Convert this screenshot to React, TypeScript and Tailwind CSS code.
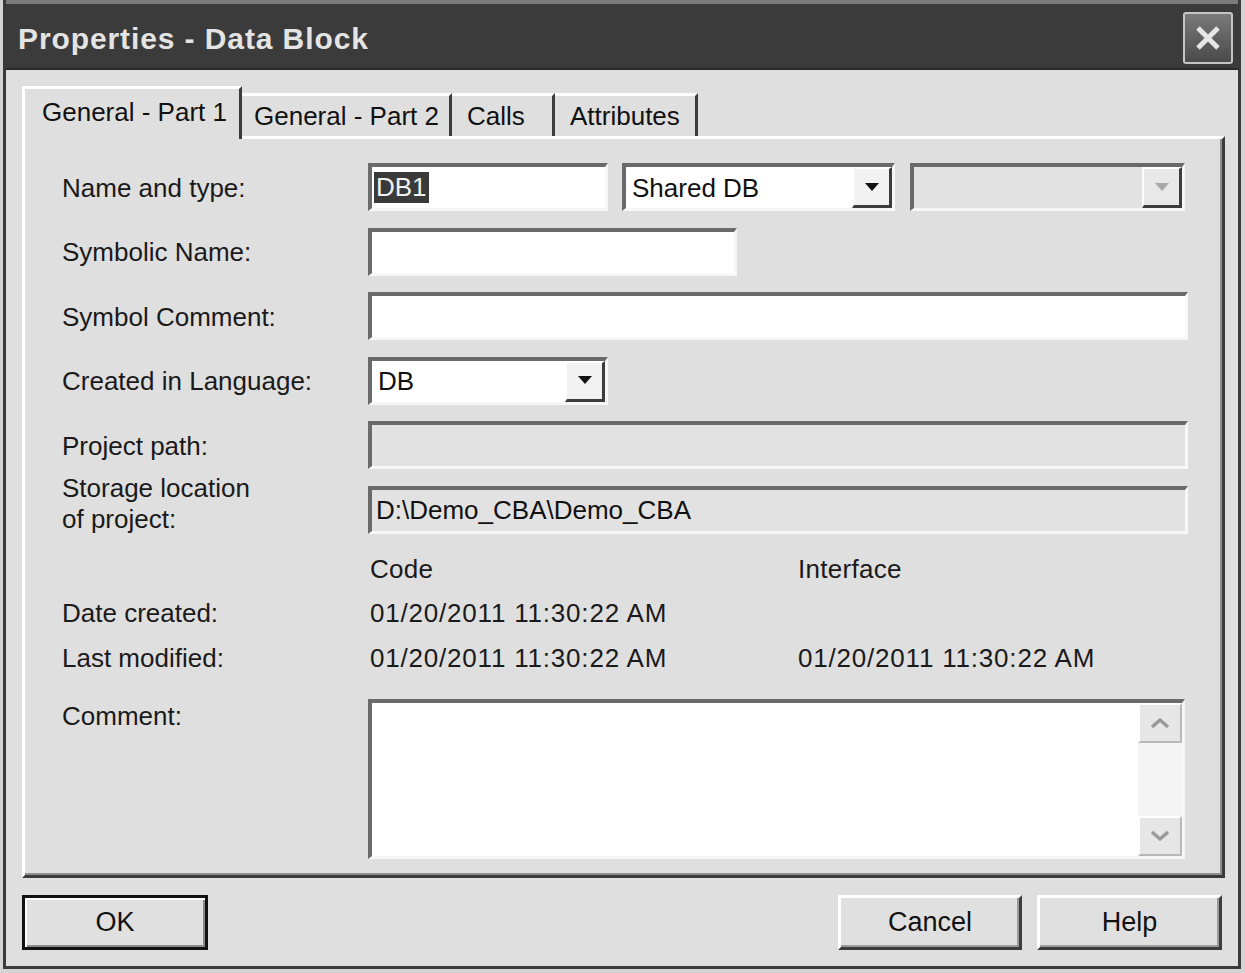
import React from 'react';

const sunken =
  'border-t-[4px] border-l-[4px] border-b-[3px] border-r-[3px] border-t-[#6a6a6a] border-l-[#6a6a6a] border-b-[#f7f7f7] border-r-[#f7f7f7]';

const raised =
  'border-t-[3px] border-l-[3px] border-b-[3px] border-r-[3px] border-t-white border-l-white border-b-[#3c3c3c] border-r-[#3c3c3c] shadow-[inset_-2px_-2px_0_#9a9a9a]';

function Arrow({ disabled }: { disabled?: boolean }) {
  return (
    <svg width="14" height="9" viewBox="0 0 14 9">
      <path d="M0 0 H14 L7 8 Z" fill={disabled ? '#a8a8a8' : '#111'} />
    </svg>
  );
}

function Combo({ width, value, disabled }: { width: string; value?: string; disabled?: boolean }) {
  return (
    <div className={`${width} h-[48px] ${sunken} flex ${disabled ? 'bg-[#e2e2e2]' : 'bg-white'}`}>
      <div className="flex-1 flex items-center pl-[6px] text-[26px] leading-none text-[#111]">
        {value}
      </div>
      <div
        className={`w-[40px] flex items-center justify-center ${
          disabled ? 'bg-[#e8e8e8]' : 'bg-[#f2f2f2]'
        } border-b-[3px] border-r-[3px] border-b-[#3c3c3c] border-r-[#3c3c3c] border-t-[2px] border-l-[2px] border-t-white border-l-white`}
      >
        <Arrow disabled={disabled} />
      </div>
    </div>
  );
}

function Field({ width, value, disabled }: { width: string; value?: string; disabled?: boolean }) {
  return (
    <div
      className={`${width} h-[48px] ${sunken} flex items-center pl-[4px] text-[26px] leading-none text-[#111] ${
        disabled ? 'bg-[#e2e2e2]' : 'bg-white'
      }`}
    >
      {value}
    </div>
  );
}

function Row({
  label,
  children,
  labelClass = 'pt-[2px]',
}: {
  label: React.ReactNode;
  children: React.ReactNode;
  labelClass?: string;
}) {
  return (
    <div className="flex items-center h-[48px]">
      <div className={`w-[306px] text-[26px] leading-[31px] text-[#1a1a1a] ${labelClass}`}>{label}</div>
      {children}
    </div>
  );
}

function Tab({ label, width, pad, active }: { label: string; width: string; pad: string; active?: boolean }) {
  if (active) {
    return (
      <div
        className={`${width} ${pad} h-[53px] relative z-10 -mb-[3px] bg-[#dfdfdf] border-t-[3px] border-l-[3px] border-r-[3px] border-t-white border-l-white border-r-[#3c3c3c] flex items-center text-[26px] leading-none text-[#111]`}
      >
        <span className="-mt-[4px]">{label}</span>
      </div>
    );
  }
  return (
    <div
      className={`${width} ${pad} h-[43px] bg-[#dfdfdf] border-t-[3px] border-r-[3px] border-t-white border-r-[#3c3c3c] flex items-center text-[26px] leading-none text-[#111]`}
    >
      {label}
    </div>
  );
}

function Chevron({ up }: { up?: boolean }) {
  return (
    <svg width="20" height="12" viewBox="0 0 20 12">
      <path
        d={up ? 'M2 10 L10 3 L18 10' : 'M2 2 L10 9 L18 2'}
        fill="none"
        stroke="#9a9a9a"
        strokeWidth="3.5"
      />
    </svg>
  );
}

function Button({ label, width, isDefault }: { label: string; width: string; isDefault?: boolean }) {
  return (
    <div
      className={`${width} h-[55px] flex items-center justify-center text-[27px] leading-none text-[#111] bg-[#e0e0e0] ${
        isDefault ? 'border-[3px] border-[#111] shadow-[inset_2px_2px_0_#fff,inset_-2px_-2px_0_#8a8a8a]' : raised
      }`}
    >
      {label}
    </div>
  );
}

export default function App() {
  return (
    <div className="w-[1245px] h-[973px] bg-[#d4d4d4] overflow-hidden font-['Liberation_Sans',Arial,sans-serif]">
      <div className="ml-[3px] w-[1238px] h-[969px] bg-[#dfdfdf] border-l-[3px] border-r-[3px] border-b-[3px] border-[#3a3a3a] flex flex-col">
        {/* title bar */}
        <div className="h-[70px] shrink-0 bg-[#3b3b3b] border-t-[4px] border-t-[#7a7a7a] border-b-[2px] border-b-[#2a2a2a] flex items-center pl-[12px] pr-[5px]">
          <div className="flex-1 text-[30px] font-bold tracking-[0.9px] text-[#e4e4e4] leading-none mt-[6px]">
            Properties - Data Block
          </div>
          <div className="w-[50px] h-[52px] mt-[4px] border-[2px] border-[#c4c4c4] rounded-[3px] bg-gradient-to-b from-[#7a7a7a] to-[#4a4a4a] flex items-center justify-center">
            <svg width="30" height="30" viewBox="0 0 30 30">
              <path d="M5 5 L25 25 M25 5 L5 25" stroke="#e6e6e6" strokeWidth="5" />
            </svg>
          </div>
        </div>

        {/* tabs */}
        <div className="flex items-end pl-[16px] h-[66px] shrink-0">
          <Tab label="General - Part 1" width="w-[220px]" pad="pl-[17px]" active />
          <Tab label="General - Part 2" width="w-[210px]" pad="pl-[12px]" />
          <Tab label="Calls" width="w-[103px]" pad="pl-[15px]" />
          <Tab label="Attributes" width="w-[143px]" pad="pl-[15px]" />
        </div>

        {/* panel */}
        <div className="ml-[16px] w-[1203px] h-[742px] shrink-0 bg-[#dfdfdf] border-t-[3px] border-l-[3px] border-b-[3px] border-r-[3px] border-t-white border-l-white border-b-[#3c3c3c] border-r-[#3c3c3c] shadow-[inset_-2px_-2px_0_#8e8e8e] pt-[24px] pl-[37px]">
          <div className="flex flex-col gap-[16.5px]">
            <Row label="Name and type:">
              <div className={`w-[240px] h-[48px] ${sunken} bg-white flex items-center pl-[2px]`}>
                <span className="bg-[#3a3a3a] text-[#f0f0f0] text-[26px] leading-[31px] px-[2px]">DB1</span>
              </div>
              <div className="w-[14px]" />
              <Combo width="w-[273px]" value="Shared DB" />
              <div className="w-[15px]" />
              <Combo width="w-[275px]" disabled />
            </Row>
            <Row label="Symbolic Name:">
              <Field width="w-[369px]" />
            </Row>
            <Row label="Symbol Comment:">
              <Field width="w-[820px]" />
            </Row>
            <Row label="Created in Language:">
              <Combo width="w-[240px]" value="DB" />
            </Row>
            <Row label="Project path:">
              <Field width="w-[820px]" disabled />
            </Row>
            <Row
              labelClass="-mt-[12px]"
              label={
                <>
                  Storage location
                  <br />
                  of project:
                </>
              }
            >
              <Field width="w-[820px]" value="D:\Demo_CBA\Demo_CBA" disabled />
            </Row>
          </div>

          <div className="flex items-center h-[40px] mt-[15px] text-[26px] leading-none text-[#1a1a1a] tracking-[0.3px]">
            <div className="w-[308px]" />
            <div className="w-[428px]">Code</div>
            <div>Interface</div>
          </div>
          <div className="flex items-center h-[44px] mt-[2px] text-[26px] leading-none text-[#1a1a1a]">
            <div className="w-[308px]">Date created:</div>
            <div className="w-[428px] tracking-[0.8px]">01/20/2011 11:30:22 AM</div>
          </div>
          <div className="flex items-center h-[44px] mt-[1px] text-[26px] leading-none text-[#1a1a1a]">
            <div className="w-[308px]">Last modified:</div>
            <div className="w-[428px] tracking-[0.8px]">01/20/2011 11:30:22 AM</div>
            <div className="tracking-[0.8px]">01/20/2011 11:30:22 AM</div>
          </div>

          <div className="flex mt-[19px]">
            <div className="w-[306px] text-[26px] leading-none text-[#1a1a1a] pt-[4px]">Comment:</div>
            <div className={`w-[817px] h-[160px] ${sunken} bg-white flex justify-end`}>
              <div className="w-[44px] flex flex-col bg-[#f0f0f0]">
                <div className="h-[40px] bg-[#e6e6e6] border-[2px] border-t-white border-l-white border-b-[#b8b8b8] border-r-[#b8b8b8] flex items-center justify-center">
                  <Chevron up />
                </div>
                <div className="flex-1 bg-[#f4f4f4]" />
                <div className="h-[40px] bg-[#e6e6e6] border-[2px] border-t-white border-l-white border-b-[#b8b8b8] border-r-[#b8b8b8] flex items-center justify-center">
                  <Chevron />
                </div>
              </div>
            </div>
          </div>
        </div>

        {/* buttons */}
        <div className="flex items-center mt-[17px] pl-[16px] pr-[16px]">
          <Button label="OK" width="w-[186px]" isDefault />
          <div className="flex-1" />
          <Button label="Cancel" width="w-[184px]" />
          <div className="w-[15px]" />
          <Button label="Help" width="w-[185px]" />
        </div>
      </div>
    </div>
  );
}
